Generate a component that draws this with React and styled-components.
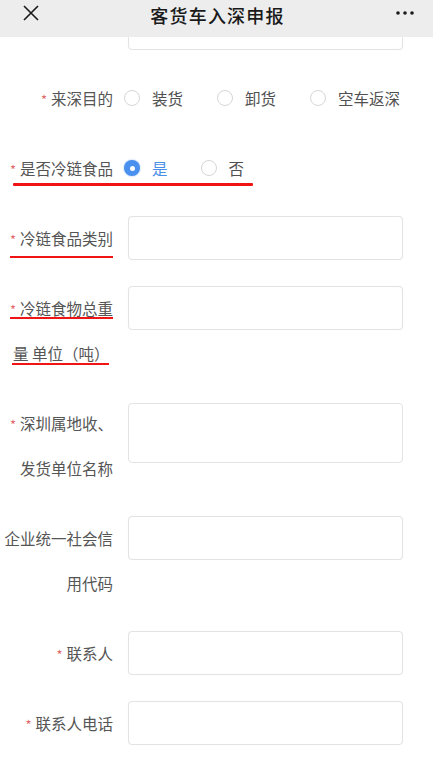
import React, { useState } from "react";
import styled, { createGlobalStyle } from "styled-components";

const GlobalStyle = createGlobalStyle`
  body {
    margin: 0;
    background: #fff;
    font-family: "Noto Sans CJK SC", "Noto Sans", sans-serif;
  }
`;

const Page = styled.div`
  width: 433px;
  min-height: 758px;
  background: #fff;
  overflow: hidden;
`;

const TopBar = styled.header`
  position: fixed;
  top: 0;
  left: 0;
  right: 0;
  height: 37px;
  background: #ededed;
  display: flex;
  align-items: flex-start;
  justify-content: space-between;
  padding: 4px 19px 0 23px;
  box-sizing: border-box;
  z-index: 10;
`;

const Title = styled.h1`
  margin: 0;
  font-size: 18px;
  font-weight: 500;
  letter-spacing: 1.2px;
  line-height: 22px;
  color: #1a1a1a;
`;

const IconBtn = styled.span`
  display: flex;
  align-items: center;
  height: 18px;
  color: #1a1a1a;
`;

const Form = styled.form`
  display: flex;
  flex-direction: column;
  gap: 25px;
  padding: 5.5px 30px 40px 0;
`;

const Row = styled.div`
  position: relative;
  display: grid;
  grid-template-columns: 113px 1fr;
  column-gap: 15px;
  align-items: start;

  &::after {
    content: "";
    display: ${(p) => (p.$marked ? "block" : "none")};
    position: absolute;
    left: 13px;
    top: 37.5px;
    width: 240px;
    height: 2.5px;
    background: #f01414;
    border-radius: 1px;
  }
`;

const Label = styled.label`
  font-size: 15.5px;
  line-height: 45px;
  color: #555;
  text-align: right;
  white-space: nowrap;
`;

const Line = styled.span`
  display: block;
  text-align: ${(p) => (p.$left ? "left" : "right")};
  padding-left: ${(p) => (p.$left ? "13px" : "0")};
`;

const Req = styled.span`
  color: #e06a6a;
  font-size: 13px;
  line-height: 1;
  margin-right: 4px;
`;

const Mark = styled.span`
  display: inline-block;
  line-height: 16px;
  padding: 0 0 ${(p) => p.$pad}px ${(p) => p.$lead || 0}px;
  margin-left: ${(p) => -(p.$lead || 0)}px;
  border-bottom: 2.5px solid #f01414;
`;

const Field = styled.input`
  display: block;
  width: 100%;
  height: 44px;
  margin-top: 0.5px;
  box-sizing: border-box;
  border: 1px solid #e3e3e3;
  border-radius: 4px;
  box-shadow: 0 0 1px rgba(0, 0, 0, 0.05);
  background: #fff;
  outline: none;
  font: inherit;
  font-size: 15px;
  padding: 0 10px;
`;

const Area = styled.textarea`
  display: block;
  width: 100%;
  height: 60px;
  margin-top: 2.5px;
  box-sizing: border-box;
  border: 1px solid #e3e3e3;
  border-radius: 4px;
  background: #fff;
  outline: none;
  resize: none;
  font: inherit;
  font-size: 15px;
  padding: 8px 10px;
`;

const RadioGroup = styled.div`
  display: flex;
  align-items: center;
  height: 45px;
  margin-left: -4px;
  gap: ${(p) => p.$gap || "34px"};
`;

const RadioItem = styled.label`
  display: flex;
  align-items: center;
  gap: 12px;
  font-size: 15.5px;
  color: ${(p) => (p.$on ? "#4a8fe6" : "#505050")};
  cursor: pointer;
`;

const Dot = styled.span`
  box-sizing: border-box;
  width: 16px;
  height: 16px;
  border-radius: 50%;
  border: ${(p) => (p.$on ? "none" : "1px solid #d6d6d6")};
  background: ${(p) => (p.$on ? "#4a90ee" : "#fff")};
  display: flex;
  align-items: center;
  justify-content: center;
  box-shadow: ${(p) => (p.$on ? "0 0 2px rgba(74,144,238,0.6)" : "none")};

  &::after {
    content: "";
    display: ${(p) => (p.$on ? "block" : "none")};
    width: 5px;
    height: 5px;
    border-radius: 50%;
    background: #fff;
  }
`;

function Radios({ options, value, onChange, gap }) {
  return (
    <RadioGroup $gap={gap}>
      {options.map((o) => (
        <RadioItem key={o} $on={value === o} onClick={() => onChange(o)}>
          <Dot $on={value === o} />
          {o}
        </RadioItem>
      ))}
    </RadioGroup>
  );
}

function App() {
  const [purpose, setPurpose] = useState("");
  const [cold, setCold] = useState("是");

  return (
    <Page>
      <GlobalStyle />
      <TopBar>
        <IconBtn>
          <svg width="16" height="16" viewBox="0 0 16 16">
            <path d="M1 1L15 15M15 1L1 15" stroke="#1a1a1a" strokeWidth="1.6" fill="none" />
          </svg>
        </IconBtn>
        <Title>客货车入深申报</Title>
        <IconBtn>
          <svg width="18" height="4" viewBox="0 0 18 4">
            <circle cx="2" cy="2" r="1.8" fill="#1a1a1a" />
            <circle cx="9" cy="2" r="1.8" fill="#1a1a1a" />
            <circle cx="16" cy="2" r="1.8" fill="#1a1a1a" />
          </svg>
        </IconBtn>
      </TopBar>

      <Form>
        <Row>
          <Label>车牌号码</Label>
          <Field />
        </Row>

        <Row>
          <Label>
            <Req>*</Req>来深目的
          </Label>
          <Radios options={["装货", "卸货", "空车返深"]} value={purpose} onChange={setPurpose} />
        </Row>

        <Row $marked>
          <Label>
            <Req>*</Req>是否冷链食品
          </Label>
          <Radios options={["是", "否"]} value={cold} onChange={setCold} gap="33px" />
        </Row>

        <Row>
          <Label>
            <Mark $pad={10}>
              <Req>*</Req>冷链食品类别
            </Mark>
          </Label>
          <Field />
        </Row>

        <Row>
          <Label>
            <Line>
              <Mark $pad={1}>
                <Req>*</Req>冷链食物总重
              </Mark>
            </Line>
            <Line $left>
              <Mark $pad={2} $lead={1}>
                量 单位（吨）
              </Mark>
            </Line>
          </Label>
          <Field />
        </Row>

        <Row>
          <Label>
            <Line>
              <Req>*</Req>深圳属地收、
            </Line>
            <Line>发货单位名称</Line>
          </Label>
          <Area />
        </Row>

        <Row>
          <Label>
            <Line>企业统一社会信</Line>
            <Line>用代码</Line>
          </Label>
          <Field />
        </Row>

        <Row>
          <Label>
            <Req>*</Req>联系人
          </Label>
          <Field />
        </Row>

        <Row>
          <Label>
            <Req>*</Req>联系人电话
          </Label>
          <Field />
        </Row>
      </Form>
    </Page>
  );
}

export default App;
